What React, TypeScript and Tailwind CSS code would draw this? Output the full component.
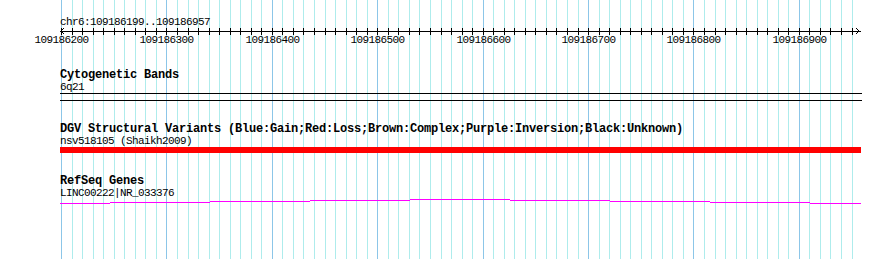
const START = 109186199;
const END = 109186957;
const LEFT = 60;
const WIDTH = 800;

const toX = (pos: number) => Math.round(LEFT + ((pos - START) * WIDTH) / (END - START + 1));

const gridPositions: number[] = [];
for (let p = 109186200; p <= END; p += 10) gridPositions.push(p);

const majorLabels = [109186200, 109186300, 109186400, 109186500, 109186600, 109186700, 109186800, 109186900];

// stepped transcript line, [x1, x2, y-offset]
const geneSegments: [number, number, number][] = [
  [60, 110, 4],
  [110, 210, 3],
  [210, 310, 2],
  [310, 410, 1],
  [410, 510, 0],
  [510, 610, 1],
  [610, 710, 2],
  [710, 810, 3],
  [810, 861, 4],
];

function Grid() {
  return (
    <svg className="absolute inset-0" width={890} height={259}>
      {gridPositions.map((p) => (
        <rect
          key={p}
          x={toX(p)}
          y={0}
          width={1}
          height={259}
          fill={p % 100 === 0 ? "#8cc6e8" : "#aeecec"}
        />
      ))}
    </svg>
  );
}

function Ruler() {
  return (
    <svg className="block" width={890} height={48}>
      <text x={LEFT} y={25} fontSize={11} letterSpacing={-0.6} fill="#000">
        chr6:109186199..109186957
      </text>
      <rect x={LEFT} y={31} width={WIDTH + 1} height={1} fill="#000" />
      <path d="M64 28 L61 31 L64 34 M856 28 L859 31 L856 34" stroke="#000" strokeWidth={1} fill="none" />
      {gridPositions.map((p) => (
        <rect key={p} x={toX(p)} y={28} width={1} height={7} fill="#000" />
      ))}
      {majorLabels.map((p) => (
        <text
          key={p}
          x={toX(p) + 0.5}
          y={43}
          fontSize={11}
          letterSpacing={-0.6}
          textAnchor="middle"
          fill="#000"
        >
          {p}
        </text>
      ))}
    </svg>
  );
}

function TrackHead({ title, label }: { title: string; label: string }) {
  return (
    <div className="flex flex-col">
      <div className="h-[12px] text-[12px] leading-[12px] font-bold tracking-[-0.2px] whitespace-nowrap">{title}</div>
      <div className="h-[12px] text-[11px] leading-[12px] tracking-[-0.6px] whitespace-nowrap">{label}</div>
    </div>
  );
}

export default function App() {
  return (
    <div className="relative w-[890px] h-[259px] overflow-hidden bg-white text-black font-['Liberation_Mono','DejaVu_Sans_Mono',monospace]">
      <Grid />
      <div className="relative flex flex-col">
        <Ruler />
        <div className="flex flex-col pl-[60px] pt-[21px]">
          <TrackHead title="Cytogenetic Bands" label="6q21" />
          <div className="w-[802px] h-[8px] border-y border-black" />

          <div className="mt-[22px]">
            <TrackHead
              title="DGV Structural Variants (Blue:Gain;Red:Loss;Brown:Complex;Purple:Inversion;Black:Unknown)"
              label="nsv518105 (Shaikh2009)"
            />
          </div>
          <div className="w-[801px] h-[6px] bg-[#ff0000]" />

          <div className="mt-[22px]">
            <TrackHead title="RefSeq Genes" label="LINC00222|NR_033376" />
          </div>
          <svg className="block" width={802} height={5}>
            {geneSegments.map(([x1, x2, y]) => (
              <rect key={x1} x={x1 - LEFT} y={y} width={x2 - x1} height={1} fill="#ff00ff" />
            ))}
          </svg>
        </div>
      </div>
    </div>
  );
}
